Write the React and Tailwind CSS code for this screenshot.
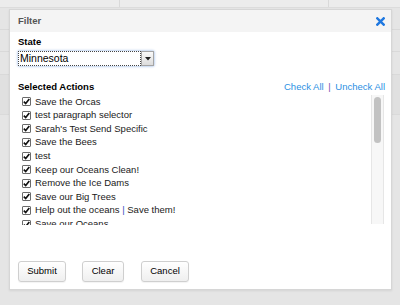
import React from 'react';

const actions = [
    "Save the Orcas",
    "test paragraph selector",
    "Sarah's Test Send Specific",
    "Save the Bees",
    "test",
    "Keep our Oceans Clean!",
    "Remove the Ice Dams",
    "Save our Big Trees",
    "Help out the oceans | Save them!",
    "Save our Oceans",
];

function Checkbox() {
    return (
        <span className="w-[9px] h-[9px] border border-[#6b6b6b] bg-white flex items-center justify-center shrink-0 rounded-[1px]">
            <svg width="7" height="7" viewBox="0 0 7 7">
                <path d="M0.8 3.6 L2.7 5.6 L6.3 1" stroke="#111" strokeWidth="1.6" fill="none" />
            </svg>
        </span>
    );
}

function ActionLabel({ text }) {
    if (text.includes(' | ')) {
        const [a, b] = text.split(' | ');
        return (
            <span>
                {a} <span className="text-[#3a4fc4]">|</span> {b}
            </span>
        );
    }
    return <span>{text}</span>;
}

export default function App() {
    return (
        <div className="relative w-[400px] h-[305px] overflow-hidden bg-[#e5e5e5] font-['Liberation_Sans',Arial,sans-serif]">
            {/* table behind the overlay */}
            <div className="flex h-[8px] bg-[#ececec] border-b border-[#dcdcdc]">
                <div className="w-[120px] border-r border-[#d9d9d9]"></div>
                <div className="w-[209px] border-r border-[#d9d9d9]"></div>
                <div className="flex-1"></div>
            </div>
            <div className="h-[22px] border-b border-[#d9d9d9]"></div>
            <div className="h-[22px] border-b border-[#d9d9d9]"></div>
            <div className="h-[23px] border-b border-[#d9d9d9]"></div>
            <div className="h-[40px] bg-[#e0e0e0] border-b border-[#dadada]"></div>

            {/* modal */}
            <div className="absolute left-[9px] top-[9px] w-[383px] h-[281px] bg-white border border-[#d6d6d6] shadow-[0_1px_2px_rgba(0,0,0,0.08)] flex flex-col">
                <div className="h-[22px] bg-[#f4f4f4] flex items-center justify-between pl-[8px] pr-[6px]">
                    <span className="text-[9.5px] font-bold text-[#555]">Filter</span>
                    <svg width="9" height="9" viewBox="0 0 9 9">
                        <path d="M1.3 1.3 L7.7 7.7 M7.7 1.3 L1.3 7.7" stroke="#1f78e0" strokeWidth="2.4" strokeLinecap="square" />
                    </svg>
                </div>

                <div className="flex-1 flex flex-col pl-[8px] pr-[6px] pb-[7px]">
                    <div className="mt-[4px] h-[12px] leading-[12px] text-[9.5px] font-bold text-black">State</div>
                    <div className="mt-[3px] flex items-center w-[136px] h-[15px] rounded-[2px] shadow-[0_0_2px_1px_rgba(120,160,220,0.45)]">
                        <div className="flex-1 h-full border border-dotted border-[#444] flex items-center pl-[1px] text-[10.5px] text-black leading-none">
                            Minnesota
                        </div>
                        <div className="w-[13px] h-full border border-[#a5a5a5] bg-gradient-to-b from-[#fafafa] to-[#dcdcdc] flex items-center justify-center">
                            <svg width="6" height="4" viewBox="0 0 6 4">
                                <path d="M0 0 L6 0 L3 3.5 Z" fill="#222" />
                            </svg>
                        </div>
                    </div>

                    <div className="mt-[15px] h-[13px] flex items-center justify-between">
                        <span className="text-[9.5px] font-bold text-black">Selected Actions</span>
                        <span className="text-[9.5px] text-[#2b8fe3]">
                            Check All <span className="text-[#7a4fb0] mx-[2px]">|</span> Uncheck All
                        </span>
                    </div>

                    <div className="mt-[1px] flex h-[133px]">
                        <div className="flex-1 h-[130px] overflow-hidden">
                            {actions.map((a, i) => (
                                <div key={i} className="h-[13.6px] flex items-center gap-[4px] pl-[4px] text-[9.5px] text-[#1a1a1a] whitespace-nowrap">
                                    <Checkbox />
                                    <ActionLabel text={a} />
                                </div>
                            ))}
                        </div>
                        <div className="w-[13px] h-[129px] mr-[1px] bg-[#f7f7f7] border-l border-r border-[#e6e6e6] flex justify-center pt-[2px]">
                            <div className="w-[7px] h-[46px] rounded-full bg-[#c2c2c2]"></div>
                        </div>
                    </div>

                    <div className="mt-auto flex items-center">
                        <button className="w-[48px] h-[21px] rounded-[3px] border border-[#cfcfcf] bg-gradient-to-b from-white to-[#efefef] text-[9.5px] text-black shadow-[0_1px_1px_rgba(0,0,0,0.05)]">Submit</button>
                        <button className="ml-[16px] w-[42px] h-[21px] rounded-[3px] border border-[#cfcfcf] bg-gradient-to-b from-white to-[#efefef] text-[9.5px] text-black shadow-[0_1px_1px_rgba(0,0,0,0.05)]">Clear</button>
                        <button className="ml-[17px] w-[48px] h-[21px] rounded-[3px] border border-[#cfcfcf] bg-gradient-to-b from-white to-[#efefef] text-[9.5px] text-black shadow-[0_1px_1px_rgba(0,0,0,0.05)]">Cancel</button>
                    </div>
                </div>
            </div>
        </div>
    );
}
